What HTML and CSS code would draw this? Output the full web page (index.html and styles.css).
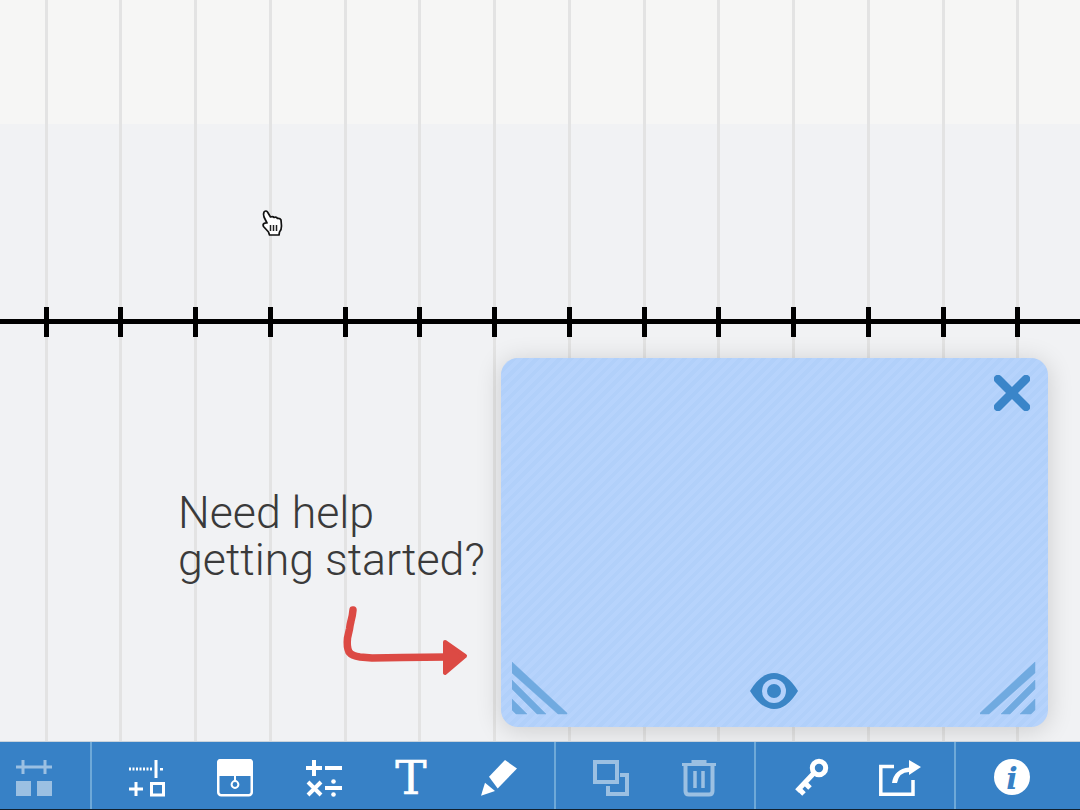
FILE: index.html
```html
<!DOCTYPE html>
<html lang="en">
<head>
  <meta charset="UTF-8" />
  <meta name="viewport" content="width=device-width, initial-scale=1.0"/>
  <title>Number Line</title>
  <link rel="stylesheet" href="styles.css">
</head>
<body>

  <main class="stage">
    <div class="top-band"></div>

    <div class="grid-lines">
      <span></span><span></span><span></span><span></span><span></span><span></span><span></span>
      <span></span><span></span><span></span><span></span><span></span><span></span><span></span>
    </div>

    <div class="number-line">
      <span></span><span></span><span></span><span></span><span></span><span></span><span></span>
      <span></span><span></span><span></span><span></span><span></span><span></span><span></span>
    </div>

    <!-- mouse pointer -->
    <svg class="pointer" viewBox="0 0 22 28" width="22" height="28">
      <path d="M6 14 L3 8 Q2 5 3 3 Q5 1 6.500 3 L9.500 8 Q12 7 13 8.500 Q15.500 7.500 16.500 9.500 Q19 9 20 11 L20.500 17 Q20.500 21 18.500 23 L18 26 H8.500 L7.500 23 L2.500 17.500 Q1.500 15.500 3 14.500 Q4.500 13.500 6 14 Z" fill="#fff" stroke="#111" stroke-width="1.700" stroke-linejoin="round"/>
      <path d="M9.500 16 V22 M12.500 16 V22 M15.500 16 V22" stroke="#222" stroke-width="1.500"/>
    </svg>

    <p class="help-text">Need help<br>getting started?</p>

    <svg class="help-arrow" viewBox="0 0 130 76" width="130" height="76">
      <path d="M11 7 Q10.500 13 9 18 Q8 22 7.500 26 L5.500 35 Q4.500 44 7 49 Q10 53 18 54 L30 55 L60 54.500 L105 54" fill="none" stroke="#dc4a44" stroke-width="7.500" stroke-linecap="round" stroke-linejoin="round"/>
      <path d="M103 39 L123 53 L103 70 Z" fill="#dc4a44" stroke="#dc4a44" stroke-width="4" stroke-linejoin="round"/>
    </svg>

    <section class="help-card">
      <svg class="card-close" viewBox="0 0 36 36" width="36" height="36">
        <path d="M4 4 L32 32 M32 4 L4 32" stroke="#3a85c9" stroke-width="8.500" stroke-linecap="round"/>
      </svg>
      <svg class="card-corner corner-left" viewBox="0 0 56 54" width="56" height="54">
        <path d="M0 1 L55 52 V53 H46 L0 12 Z M0 19 L34 53 H25 L0 28 Z M0 38 L15 53 H4 L0 49 Z" fill="#70aae0" stroke="#70aae0" stroke-width="0.500" stroke-linejoin="round"/>
      </svg>
      <svg class="card-eye" viewBox="0 0 48 36" width="48" height="36">
        <path d="M0 18 Q11 0 24 0 Q37 0 48 18 Q37 36 24 36 Q11 36 0 18 Z" fill="#3a85c6"/>
        <circle cx="24" cy="18" r="12" fill="#b3d1fb"/>
        <circle cx="24" cy="18" r="7" fill="#3a85c6"/>
      </svg>
      <svg class="card-corner corner-right" viewBox="0 0 56 54" width="56" height="54">
        <path d="M55 1 L0 52 V53 H9 L55 12 Z M55 19 L21 53 H30 L55 28 Z M55 38 L40 53 H51 L55 49 Z" fill="#70aae0" stroke="#70aae0" stroke-width="0.500" stroke-linejoin="round"/>
      </svg>
    </section>
  </main>

  <nav class="toolbar">
    <div class="tool-group group-first">
      <button class="tool faded">
        <svg viewBox="0 0 40 40" width="40" height="40">
          <path d="M2 9 H38 M9 2 V16 M31 2 V16" stroke="#fff" stroke-width="3" fill="none"/>
          <path d="M2 23 H17 V38 H2 Z M23 23 H38 V38 H23 Z" fill="#fff"/>
        </svg>
      </button>
    </div>

    <div class="tool-group group-main">
      <button class="tool">
        <svg viewBox="0 0 40 40" width="40" height="40">
          <path d="M2 11 H26" stroke="#fff" stroke-width="3" stroke-dasharray="2 1.500" fill="none"/>
          <path d="M29 2 V20 M34.500 10 V12.500 M2 31 H16 M9 24 V38" stroke="#fff" stroke-width="3" fill="none"/>
          <rect x="24.500" y="25.500" width="12" height="11.500" stroke="#fff" stroke-width="3" fill="none"/>
        </svg>
      </button>
      <button class="tool">
        <svg viewBox="0 0 40 40" width="40" height="40">
          <rect x="3.250" y="2.250" width="33.500" height="35" rx="3" stroke="#fff" stroke-width="2.500" fill="none"/>
          <path d="M2 5 Q2 1 5 1 H35 Q38 1 38 5 V18 H2 Z" fill="#fff"/>
          <path d="M20 18 V23" stroke="#fff" stroke-width="2"/>
          <circle cx="20" cy="26.500" r="3.400" stroke="#fff" stroke-width="2" fill="none"/>
        </svg>
      </button>
      <button class="tool">
        <svg viewBox="0 0 40 40" width="40" height="40">
          <path d="M3 10 H19 M11 2 V18 M22 10 H39 M5 24 L18 37 M18 24 L5 37 M22 30 H39" stroke="#fff" stroke-width="4" fill="none"/>
          <circle cx="30.500" cy="23.500" r="2.300" fill="#fff"/>
          <circle cx="30.500" cy="36.500" r="2.300" fill="#fff"/>
        </svg>
      </button>
      <button class="tool"><span class="tool-text">T</span></button>
      <button class="tool">
        <svg viewBox="0 0 40 40" width="40" height="40">
          <path d="M26 2 L38 10.500 L18.700 30.500 L10 18.700 Z" fill="#fff"/>
          <path d="M6 24.700 L16 33 L2 37.700 Z" fill="#fff"/>
        </svg>
      </button>
    </div>

    <div class="tool-group">
      <button class="tool faded">
        <svg viewBox="0 0 40 40" width="40" height="40">
          <rect x="4" y="4" width="22" height="20" stroke="#fff" stroke-width="4" fill="none"/>
          <path d="M29 17 H36 V36 H17 V28" stroke="#fff" stroke-width="4" fill="none"/>
        </svg>
      </button>
      <button class="tool faded">
        <svg viewBox="0 0 40 40" width="40" height="40">
          <path d="M3 6.500 H37 M14 6 V3.500 H26 V6" stroke="#fff" stroke-width="3" fill="none"/>
          <path d="M6.500 7 V33 Q6.500 36.500 10 36.500 H30 Q33.500 36.500 33.500 33 V7" stroke="#fff" stroke-width="4" fill="none"/>
          <path d="M16 13 V30 M24 13 V30" stroke="#fff" stroke-width="3.500" fill="none"/>
        </svg>
      </button>
    </div>

    <div class="tool-group">
      <button class="tool">
        <svg viewBox="0 0 40 40" width="40" height="40">
          <circle cx="28" cy="10" r="6.700" stroke="#fff" stroke-width="5" fill="none"/>
          <path d="M23 15 L6 33 M8 31 L13 36 M14 25 L19 30" stroke="#fff" stroke-width="5" fill="none"/>
        </svg>
      </button>
      <button class="tool">
        <svg viewBox="0 0 40 40" width="40" height="40" class="overflow-icon">
          <path d="M15 8.500 H1.800 V36.200 H34 V22" stroke="#fff" stroke-width="3.500" fill="none"/>
          <path d="M13 25 Q15 11 30 9.500 L30 2 L42 9 L30 17 L30 14 Q20 14 18 25 Z" fill="#fff"/>
        </svg>
      </button>
    </div>

    <div class="tool-group group-last">
      <button class="tool">
        <svg viewBox="0 0 40 40" width="40" height="40">
          <circle cx="20" cy="19" r="18" fill="#fff"/>
          <text class="info-i" x="20" y="31" text-anchor="middle">i</text>
        </svg>
      </button>
    </div>
  </nav>

</body>
</html>
```

FILE: styles.css
```css
html, body {
  margin: 0;
  padding: 0;
  height: 100%;
}

body {
  font-family: Roboto, 'Liberation Sans', sans-serif;
  display: flex;
  flex-direction: column;
  height: 810px;
  overflow: hidden;
}

.stage {
  position: relative;
  flex: 1;
  overflow: hidden;
  background-color: #f1f2f4;
}

.top-band {
  height: 124px;
  background-color: #f6f6f5;
}

.grid-lines {
  position: absolute;
  top: 0;
  bottom: 0;
  left: 44.5px;
  display: flex;
  gap: 71.75px;
}

.grid-lines span {
  width: 3px;
  background-color: #e3e3e3;
}

.number-line {
  position: absolute;
  top: 319px;
  left: 0;
  right: 0;
  height: 5px;
  background-color: #000;
  display: flex;
  gap: 69.75px;
  padding-left: 43.5px;
}

.number-line span {
  flex: none;
  width: 5px;
  height: 30px;
  margin-top: -12px;
  background-color: #000;
}

.pointer {
  position: absolute;
  left: 261px;
  top: 209px;
}

.help-text {
  position: absolute;
  left: 178px;
  top: 490px;
  margin: 0;
  font-size: 44.7px;
  font-weight: 300;
  line-height: 47px;
  color: #3a3a3a;
}

.help-arrow {
  position: absolute;
  left: 342px;
  top: 603px;
}

.help-card {
  position: absolute;
  left: 501px;
  top: 358px;
  width: 547px;
  height: 369px;
  border-radius: 17px;
  background-color: #b3d1fb;
  background-image: repeating-linear-gradient(135deg, #b1d0fa 0, #b1d0fa 4px, #b6d3fc 4px, #b6d3fc 8px);
  box-shadow: 0 3px 26px rgba(0, 0, 0, 0.16);
}

.card-close {
  position: absolute;
  right: 18px;
  top: 17px;
}

.card-eye {
  position: absolute;
  left: 249px;
  top: 315px;
}

.card-corner {
  position: absolute;
  bottom: 12px;
}

.corner-left {
  left: 11px;
}

.corner-right {
  right: 12px;
}

.toolbar {
  flex: none;
  box-sizing: border-box;
  height: 69px;
  display: flex;
  background-color: #3781c6;
  border-top: 1px solid #c9d3dc;
  border-bottom: 1px solid #10202e;
}

.tool-group {
  box-sizing: border-box;
  display: flex;
  justify-content: center;
  width: 200px;
  border-left: 2px solid #6ea9d8;
}

.group-first {
  width: 90px;
  justify-content: flex-start;
  padding-left: 14px;
  border-left: none;
}

.group-main {
  width: 464px;
}

.group-last {
  flex: 1;
  justify-content: flex-start;
  padding-left: 36px;
}

.tool {
  width: 88px;
  padding: 5px 0 0;
  border: none;
  background: none;
  display: flex;
  align-items: center;
  justify-content: center;
}

.group-first .tool,
.group-last .tool {
  width: 40px;
}

.tool.faded {
  opacity: 0.5;
}

.overflow-icon {
  overflow: visible;
}

.tool-text {
  font-family: 'DejaVu Serif', serif;
  font-size: 47px;
  line-height: 40px;
  color: #fff;
  -webkit-text-stroke: 0.5px #fff;
}

.info-i {
  font-family: 'DejaVu Serif', serif;
  font-size: 30px;
  font-weight: bold;
  font-style: italic;
  fill: #3781c6;
}
```
